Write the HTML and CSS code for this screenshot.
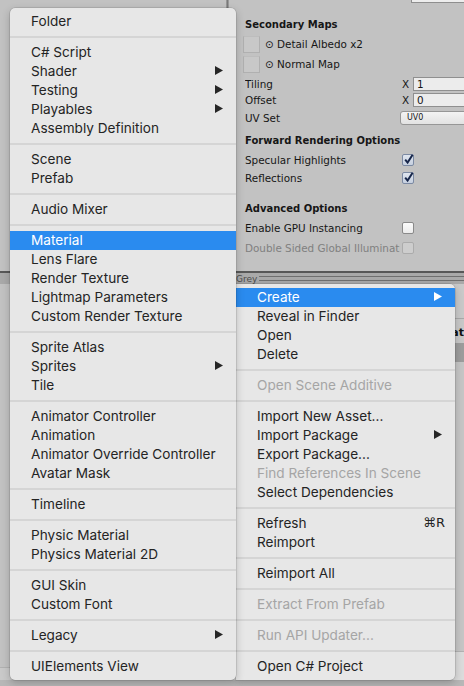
FILE: index.html
```html
<!DOCTYPE html>
<html>
<head>
<meta charset="utf-8">
<link rel="stylesheet" href="styles.css">
</head>
<body>
<div class="screen">
  <div class="top">
    <div class="left-pane"></div>
    <div class="vdivider"></div>
    <div class="inspector">
      <div class="row-field"><div class="field-tail"></div></div>
      <div class="row header m13">Secondary Maps</div>
      <div class="row slot m3"><div class="slot-box"></div><span class="slot-label">⊙ Detail Albedo x2</span></div>
      <div class="row slot m2"><div class="slot-box"></div><span class="slot-label">⊙ Normal Map</span></div>
      <div class="row m3"><span class="label">Tiling</span><span class="xlabel">X</span><span class="numfield">1</span></div>
      <div class="row"><span class="label">Offset</span><span class="xlabel">X</span><span class="numfield">0</span></div>
      <div class="row m2"><span class="label">UV Set</span><span class="dropdown">UV0</span></div>
      <div class="row header m6">Forward Rendering Options</div>
      <div class="row m4"><span class="label">Specular Highlights</span><span class="cb checked"><svg viewBox="0 0 11 11" width="11" height="11"><path d="M2.2 5.6 L4.6 8.6 L9.6 0.8" fill="none" stroke="#17264a" stroke-width="2"/></svg></span></div>
      <div class="row m2"><span class="label">Reflections</span><span class="cb checked"><svg viewBox="0 0 11 11" width="11" height="11"><path d="M2.2 5.6 L4.6 8.6 L9.6 0.8" fill="none" stroke="#17264a" stroke-width="2"/></svg></span></div>
      <div class="row header m14">Advanced Options</div>
      <div class="row m4"><span class="label">Enable GPU Instancing</span><span class="cb"></span></div>
      <div class="row m4 disabled"><span class="label">Double Sided Global Illumination</span><span class="cb off"></span></div>
    </div>
  </div>
  <div class="hline"></div>
  <div class="toolbar">
    <span class="grey-label">Grey</span>
    <span class="toolbar-lines"></span>
  </div>
  <div class="project">
    <div class="proj-left"><div class="proj-left-foot"></div></div>
    <div class="proj-right">
      <div class="pr-a"></div>
      <div class="pr-head">Format</div>
      <div class="pr-band"></div>
      <div class="pr-body"></div>
      <div class="pr-foot"></div>
    </div>
  </div>
  <div class="bottom-strip"></div>

  <div class="menu menu-right">
    <div class="item active"><span>Create</span><svg class="arrow" viewBox="0 0 8 9" width="8" height="9"><polygon points="0,0 8,4.5 0,9" fill="#ffffff"/></svg></div>
    <div class="item">Reveal in Finder</div>
    <div class="item">Open</div>
    <div class="item">Delete</div>
    <div class="sep"></div>
    <div class="item dis">Open Scene Additive</div>
    <div class="sep"></div>
    <div class="item">Import New Asset...</div>
    <div class="item"><span>Import Package</span><svg class="arrow" viewBox="0 0 8 9" width="8" height="9"><polygon points="0,0 8,4.5 0,9" fill="#262626"/></svg></div>
    <div class="item">Export Package...</div>
    <div class="item dis">Find References In Scene</div>
    <div class="item">Select Dependencies</div>
    <div class="sep"></div>
    <div class="item"><span>Refresh</span><span class="shortcut">⌘R</span></div>
    <div class="item">Reimport</div>
    <div class="sep"></div>
    <div class="item">Reimport All</div>
    <div class="sep"></div>
    <div class="item dis">Extract From Prefab</div>
    <div class="sep"></div>
    <div class="item dis">Run API Updater...</div>
    <div class="sep"></div>
    <div class="item">Open C# Project</div>
  </div>

  <div class="menu menu-left">
    <div class="item">Folder</div>
    <div class="sep"></div>
    <div class="item">C# Script</div>
    <div class="item"><span>Shader</span><svg class="arrow" viewBox="0 0 8 9" width="8" height="9"><polygon points="0,0 8,4.5 0,9" fill="#262626"/></svg></div>
    <div class="item"><span>Testing</span><svg class="arrow" viewBox="0 0 8 9" width="8" height="9"><polygon points="0,0 8,4.5 0,9" fill="#262626"/></svg></div>
    <div class="item"><span>Playables</span><svg class="arrow" viewBox="0 0 8 9" width="8" height="9"><polygon points="0,0 8,4.5 0,9" fill="#262626"/></svg></div>
    <div class="item">Assembly Definition</div>
    <div class="sep"></div>
    <div class="item">Scene</div>
    <div class="item">Prefab</div>
    <div class="sep"></div>
    <div class="item">Audio Mixer</div>
    <div class="sep"></div>
    <div class="item active">Material</div>
    <div class="item">Lens Flare</div>
    <div class="item">Render Texture</div>
    <div class="item">Lightmap Parameters</div>
    <div class="item">Custom Render Texture</div>
    <div class="sep"></div>
    <div class="item">Sprite Atlas</div>
    <div class="item"><span>Sprites</span><svg class="arrow" viewBox="0 0 8 9" width="8" height="9"><polygon points="0,0 8,4.5 0,9" fill="#262626"/></svg></div>
    <div class="item">Tile</div>
    <div class="sep"></div>
    <div class="item">Animator Controller</div>
    <div class="item">Animation</div>
    <div class="item">Animator Override Controller</div>
    <div class="item">Avatar Mask</div>
    <div class="sep"></div>
    <div class="item">Timeline</div>
    <div class="sep"></div>
    <div class="item">Physic Material</div>
    <div class="item">Physics Material 2D</div>
    <div class="sep"></div>
    <div class="item">GUI Skin</div>
    <div class="item">Custom Font</div>
    <div class="sep"></div>
    <div class="item"><span>Legacy</span><svg class="arrow" viewBox="0 0 8 9" width="8" height="9"><polygon points="0,0 8,4.5 0,9" fill="#262626"/></svg></div>
    <div class="sep"></div>
    <div class="item">UIElements View</div>
  </div>
</div>
</body>
</html>
```
FILE: styles.css
```css
html, body {
  margin: 0;
  padding: 0;
  background: #c2c2c2;
}

.screen {
  position: relative;
  width: 464px;
  height: 686px;
  overflow: hidden;
  display: flex;
  flex-direction: column;
  font-family: "DejaVu Sans", sans-serif;
  background: #c2c2c2;
}

/* ---------- inspector ---------- */
.top {
  display: flex;
  height: 271px;
  flex: none;
}

.left-pane {
  width: 226px;
  background: #c2c2c2;
}

.vdivider {
  width: 3px;
  background: linear-gradient(to right, #a3a3a3, #7a7a7a, #a9a9a9);
}

.inspector {
  flex: 1;
  padding-left: 14px;
  overflow: hidden;
  background: #c2c2c2;
  color: #161616;
  font-size: 10.4px;
}

.row-field {
  height: 3px;
  display: flex;
}

.field-tail {
  margin-left: auto;
  width: 52px;
  height: 2px;
  background: #ededed;
  border-left: 1px solid #8e8e8e;
  border-bottom: 1px solid #8e8e8e;
}

.row {
  height: 16px;
  display: flex;
  align-items: center;
  padding-left: 2px;
  white-space: nowrap;
}

.m2 { margin-top: 2px; }
.m3 { margin-top: 3px; }
.m4 { margin-top: 4px; }
.m6 { margin-top: 6px; }
.m13 { margin-top: 13px; }
.m14 { margin-top: 14px; }

.header {
  font-weight: bold;
  font-size: 10px;
}

.slot {
  height: 18px;
  padding-left: 0;
}

.slot-box {
  width: 15px;
  height: 15px;
  border: 1px solid #b0b0b0;
  border-top-color: #bdbdbd;
  background: #c8c8c8;
  margin-right: 5px;
}

.label {
  width: 155px;
  overflow: hidden;
  flex: none;
}

.xlabel {
  margin-left: 2px;
  width: 11px;
  flex: none;
}

.numfield {
  flex: 1;
  height: 12px;
  line-height: 12px;
  margin-right: -10px;
  background: #ececec;
  border: 1px solid #8f8f8f;
  padding-left: 3px;
}

.dropdown {
  flex: 1;
  height: 12px;
  line-height: 12px;
  margin-right: -10px;
  border: 1px solid #969696;
  border-radius: 3px 0 0 3px;
  background: linear-gradient(#f3f3f3, #e2e2e2);
  font-size: 8px;
  padding-left: 6px;
}

.cb {
  margin-left: 2px;
  width: 10px;
  height: 10px;
  border: 1px solid #8a8a8a;
  border-radius: 2px;
  background: linear-gradient(#fbfbfb, #ececec);
  position: relative;
  flex: none;
}

.cb svg {
  position: absolute;
  left: 0;
  top: -1px;
}

.cb.checked {
  border-color: #7c8aa3;
  background: linear-gradient(#dfe5ef, #c6d0e0);
}

.cb.off {
  border-color: #ababab;
  background: #cdcdcd;
}

.disabled {
  color: #808080;
}

/* ---------- project window (under menus) ---------- */
.hline {
  height: 2px;
  background: #585858;
  flex: none;
}

.toolbar {
  height: 11px;
  display: flex;
  align-items: center;
  background: #a9a9a9;
  flex: none;
}

.grey-label {
  margin-left: 236px;
  font-size: 9px;
  color: #4d4d4d;
  line-height: 10px;
}

.toolbar-lines {
  flex: 1;
  height: 3px;
  margin-left: 2px;
  border-top: 1px solid #6f6f6f;
  border-bottom: 1px solid #6f6f6f;
}

.project {
  flex: 1;
  display: flex;
}

.proj-left {
  width: 236px;
  background: #c2c2c2;
  display: flex;
  flex-direction: column;
  justify-content: flex-end;
}

.proj-left-foot {
  height: 12px;
  border-top: 1px solid #b1b1b1;
  background: #c9c9c9;
}

.proj-right {
  flex: 1;
  display: flex;
  flex-direction: column;
}

.pr-a {
  height: 34px;
  background: #c9c9c9;
  border-bottom: 1px solid #a9a9a9;
}

.pr-head {
  height: 24px;
  background: #c8c8c8;
  font-weight: bold;
  font-size: 11px;
  color: #111;
  padding-left: 191px;
  line-height: 28px;
  white-space: nowrap;
}

.pr-band {
  height: 19px;
  background: #9d9d9d;
}

.pr-body {
  flex: 1;
  background: #c6c6c6;
  border-bottom: 1px solid #b2b2b2;
}

.pr-foot {
  height: 28px;
  background: #dcdcdc;
}

.bottom-strip {
  height: 6px;
  background: #b7b7b7;
  flex: none;
}

/* ---------- menus ---------- */
.menu {
  position: absolute;
  box-sizing: border-box;
  padding: 4px 0;
  background: #e7e7e7;
  font-family: "Inter", "DejaVu Sans", sans-serif;
  font-size: 13.6px;
  color: #242424;
  box-shadow: 0 0 0 0.5px rgba(0, 0, 0, 0.18), 0 3px 8px rgba(0, 0, 0, 0.22);
  overflow: hidden;
}

.menu-left {
  left: 10px;
  top: 8px;
  width: 226px;
  height: 672px;
  border-radius: 5px;
  z-index: 2;
}

.menu-right {
  left: 236px;
  top: 284px;
  width: 219px;
  height: 396px;
  border-radius: 0 5px 5px 0;
  z-index: 1;
}

.item {
  box-sizing: border-box;
  height: 19px;
  display: flex;
  align-items: center;
  justify-content: space-between;
  padding: 0 13px 2px 21px;
  white-space: nowrap;
}

.item.active {
  background: #2a8bef;
  color: #ffffff;
}

.item.dis {
  color: #a5a5a5;
}

.arrow {
  flex: none;
}

.shortcut {
  font-family: "DejaVu Sans", sans-serif;
  font-size: 13px;
  margin-right: -3px;
}

.sep {
  height: 2px;
  margin: 5px 0;
  background: #d5d5d5;
}
```
